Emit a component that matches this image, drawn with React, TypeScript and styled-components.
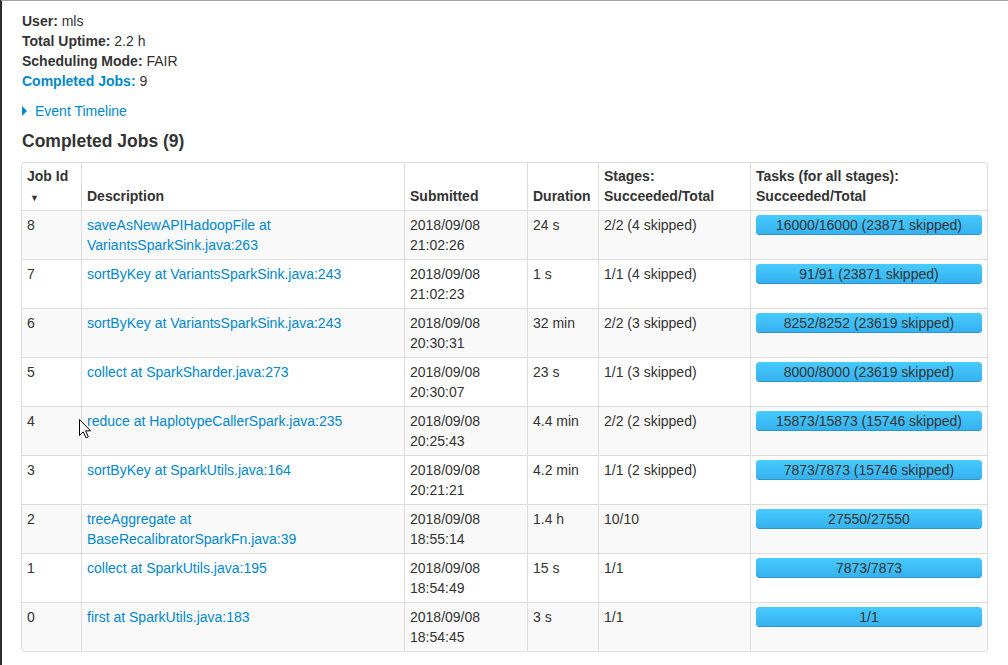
import React from "react";
import styled, { createGlobalStyle } from "styled-components";

const Global = createGlobalStyle`
  html, body { margin: 0; padding: 0; background: #fff; }
  body {
    font-family: "Liberation Sans", Arial, Helvetica, sans-serif;
    font-size: 14px;
    line-height: 20px;
    color: #333;
  }
  * { box-sizing: border-box; }
`;

const Page = styled.div`
  position: relative;
  height: 665px;
  border-top: 1px solid #a3a3a3;
  border-left: 2px solid #2b2b2b;
  padding: 10px 20px 0 19px;
  overflow: hidden;
`;

const Summary = styled.ul`
  list-style: none;
  margin: 0;
  padding: 0 0 0 1px;
`;

const SummaryItem = styled.li`
  line-height: 20px;
`;

const Link = styled.a`
  color: #0088cc;
  text-decoration: none;
  cursor: pointer;
`;

const Timeline = styled.div`
  display: flex;
  align-items: center;
  gap: 8px;
  margin-top: 10px;
  line-height: 20px;
`;

const Arrow = styled.span`
  width: 0;
  height: 0;
  border-top: 5px solid transparent;
  border-bottom: 5px solid transparent;
  border-left: 5px solid #0088cc;
  margin-left: 1px;
`;

const Heading = styled.h4`
  margin: 10px 0 11px;
  padding-left: 1px;
  font-size: 17.5px;
  line-height: 20px;
  font-weight: bold;
  color: #333;
`;

const Table = styled.table`
  width: 100%;
  table-layout: fixed;
  border-collapse: separate;
  border-spacing: 0;
  border: 1px solid #ddd;
  border-left: 0;
  border-radius: 4px;
`;

const Th = styled.th<{ $w?: number }>`
  ${(p) => (p.$w ? `width: ${p.$w}px;` : "")}
  text-align: left;
  vertical-align: bottom;
  font-weight: bold;
  padding: 3px 5px 4px;
  border-left: 1px solid #ddd;
  line-height: 20px;
  &:first-child { border-top-left-radius: 4px; }
  &:last-child { border-top-right-radius: 4px; }
`;

const SortMark = styled.span`
  font-size: 9px;
  line-height: 0;
  padding-left: 3px;
`;

const Row = styled.tr<{ $striped: boolean }>`
  background: ${(p) => (p.$striped ? "#f9f9f9" : "#fff")};
  &:last-child td:first-child { border-bottom-left-radius: 4px; }
  &:last-child td:last-child { border-bottom-right-radius: 4px; }
`;

const Td = styled.td`
  vertical-align: top;
  padding: 4px 5px;
  border-top: 1px solid #ddd;
  border-left: 1px solid #ddd;
  line-height: 20px;
  word-wrap: break-word;
`;

const Progress = styled.div`
  position: relative;
  height: 20px;
  border-radius: 3px;
  background: #f5f5f5;
  overflow: hidden;
`;

const ProgressLabel = styled.span`
  position: absolute;
  left: 0;
  top: 0;
  width: 100%;
  text-align: center;
  line-height: 20px;
  color: #333;
  z-index: 1;
`;

const ProgressBar = styled.div`
  height: 100%;
  background-color: #3ec0ff;
  background-image: linear-gradient(to bottom, #47cbff, #34b0ee);
  box-shadow: inset 0 -1px 0 rgba(0, 0, 0, 0.15);
  border-radius: 3px;
`;

const Cursor = styled.svg`
  position: absolute;
  left: 76px;
  top: 417px;
  pointer-events: none;
`;

type Job = {
  id: number;
  desc: string;
  date: string;
  time: string;
  duration: string;
  stages: string;
  done: number;
  total: number;
  skipped?: number;
};

const jobs: Job[] = [
  { id: 8, desc: "saveAsNewAPIHadoopFile at VariantsSparkSink.java:263", date: "2018/09/08", time: "21:02:26", duration: "24 s", stages: "2/2 (4 skipped)", done: 16000, total: 16000, skipped: 23871 },
  { id: 7, desc: "sortByKey at VariantsSparkSink.java:243", date: "2018/09/08", time: "21:02:23", duration: "1 s", stages: "1/1 (4 skipped)", done: 91, total: 91, skipped: 23871 },
  { id: 6, desc: "sortByKey at VariantsSparkSink.java:243", date: "2018/09/08", time: "20:30:31", duration: "32 min", stages: "2/2 (3 skipped)", done: 8252, total: 8252, skipped: 23619 },
  { id: 5, desc: "collect at SparkSharder.java:273", date: "2018/09/08", time: "20:30:07", duration: "23 s", stages: "1/1 (3 skipped)", done: 8000, total: 8000, skipped: 23619 },
  { id: 4, desc: "reduce at HaplotypeCallerSpark.java:235", date: "2018/09/08", time: "20:25:43", duration: "4.4 min", stages: "2/2 (2 skipped)", done: 15873, total: 15873, skipped: 15746 },
  { id: 3, desc: "sortByKey at SparkUtils.java:164", date: "2018/09/08", time: "20:21:21", duration: "4.2 min", stages: "1/1 (2 skipped)", done: 7873, total: 7873, skipped: 15746 },
  { id: 2, desc: "treeAggregate at BaseRecalibratorSparkFn.java:39", date: "2018/09/08", time: "18:55:14", duration: "1.4 h", stages: "10/10", done: 27550, total: 27550 },
  { id: 1, desc: "collect at SparkUtils.java:195", date: "2018/09/08", time: "18:54:49", duration: "15 s", stages: "1/1", done: 7873, total: 7873 },
  { id: 0, desc: "first at SparkUtils.java:183", date: "2018/09/08", time: "18:54:45", duration: "3 s", stages: "1/1", done: 1, total: 1 },
];

export default function App() {
  return (
    <>
      <Global />
      <Page>
        <Summary>
          <SummaryItem>
            <strong>User:</strong> mls
          </SummaryItem>
          <SummaryItem>
            <strong>Total Uptime:</strong> 2.2 h
          </SummaryItem>
          <SummaryItem>
            <strong>Scheduling Mode: </strong>FAIR
          </SummaryItem>
          <SummaryItem>
            <Link>
              <strong>Completed Jobs:</strong>
            </Link>{" "}
            9
          </SummaryItem>
        </Summary>
        <Timeline>
          <Arrow />
          <Link>Event Timeline</Link>
        </Timeline>
        <Heading>Completed Jobs (9)</Heading>
        <Table>
          <thead>
            <tr>
              <Th $w={60}>
                Job Id
                <br />
                <SortMark>▼</SortMark>
              </Th>
              <Th $w={323}>Description</Th>
              <Th $w={123}>Submitted</Th>
              <Th $w={71}>Duration</Th>
              <Th $w={152}>Stages: Succeeded/Total</Th>
              <Th>Tasks (for all stages): Succeeded/Total</Th>
            </tr>
          </thead>
          <tbody>
            {jobs.map((j, i) => (
              <Row key={j.id} $striped={i % 2 === 0}>
                <Td>{j.id}</Td>
                <Td>
                  <Link>{j.desc}</Link>
                </Td>
                <Td>
                  {j.date} {j.time}
                </Td>
                <Td>{j.duration}</Td>
                <Td>{j.stages}</Td>
                <Td>
                  <Progress>
                    <ProgressLabel>
                      {j.done}/{j.total}
                      {j.skipped ? ` (${j.skipped} skipped)` : ""}
                    </ProgressLabel>
                    <ProgressBar style={{ width: `${(j.done / j.total) * 100}%` }} />
                  </Progress>
                </Td>
              </Row>
            ))}
          </tbody>
        </Table>
        <Cursor width="13" height="21" viewBox="0 0 13 21">
          <path
            d="M1.5 1.5 L1.5 17.5 L5.2 13.8 L8 19.8 L10.3 18.8 L7.6 12.8 L12.5 12.8 Z"
            fill="#fff"
            stroke="#000"
            strokeWidth="1"
            strokeLinejoin="miter"
          />
        </Cursor>
      </Page>
    </>
  );
}
